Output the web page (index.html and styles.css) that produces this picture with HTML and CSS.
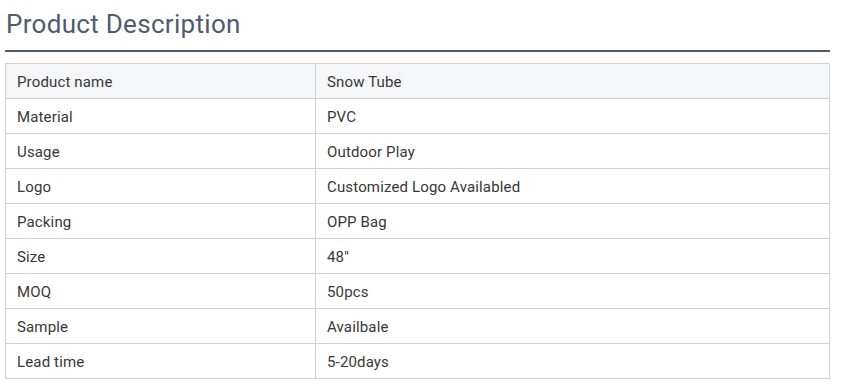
FILE: index.html
```html
<!DOCTYPE html>
<html>
<head>
<meta charset="utf-8">
<link rel="stylesheet" href="styles.css">
</head>
<body>
<div class="wrap">
  <h2 class="title">Product Description</h2>
  <table class="spec">
    <tr class="head"><td>Product name</td><td>Snow Tube</td></tr>
    <tr><td>Material</td><td>PVC</td></tr>
    <tr><td>Usage</td><td>Outdoor Play</td></tr>
    <tr><td>Logo</td><td>Customized Logo Availabled</td></tr>
    <tr><td>Packing</td><td>OPP Bag</td></tr>
    <tr><td>Size</td><td>48''</td></tr>
    <tr><td>MOQ</td><td>50pcs</td></tr>
    <tr><td>Sample</td><td>Availbale</td></tr>
    <tr><td>Lead time</td><td>5-20days</td></tr>
  </table>
</div>
</body>
</html>
```
FILE: styles.css
```css
html, body {
  margin: 0;
  padding: 0;
  background: #ffffff;
}
.wrap {
  width: 825px;
  margin-left: 5px;
  font-family: Roboto, "Liberation Sans", sans-serif;
}
.title {
  margin: 0;
  padding: 8px 0 0 1px;
  height: 42px;
  font-size: 26px;
  letter-spacing: 0.3px;
  font-weight: 400;
  line-height: 32px;
  color: #4f5b70;
  border-bottom: 2px solid #4f5b70;
}
.spec {
  margin-top: 11px;
  width: 825px;
  border-collapse: collapse;
  font-size: 15px;
  letter-spacing: 0.15px;
  color: #383838;
}
.spec td {
  border: 1px solid #d0d0d0;
  height: 35px;
  padding: 2px 11px 0;
  box-sizing: border-box;
  vertical-align: middle;
}
.spec td:first-child {
  width: 310px;
}
.spec tr.head td {
  background: #f5f6f8;
}
```
